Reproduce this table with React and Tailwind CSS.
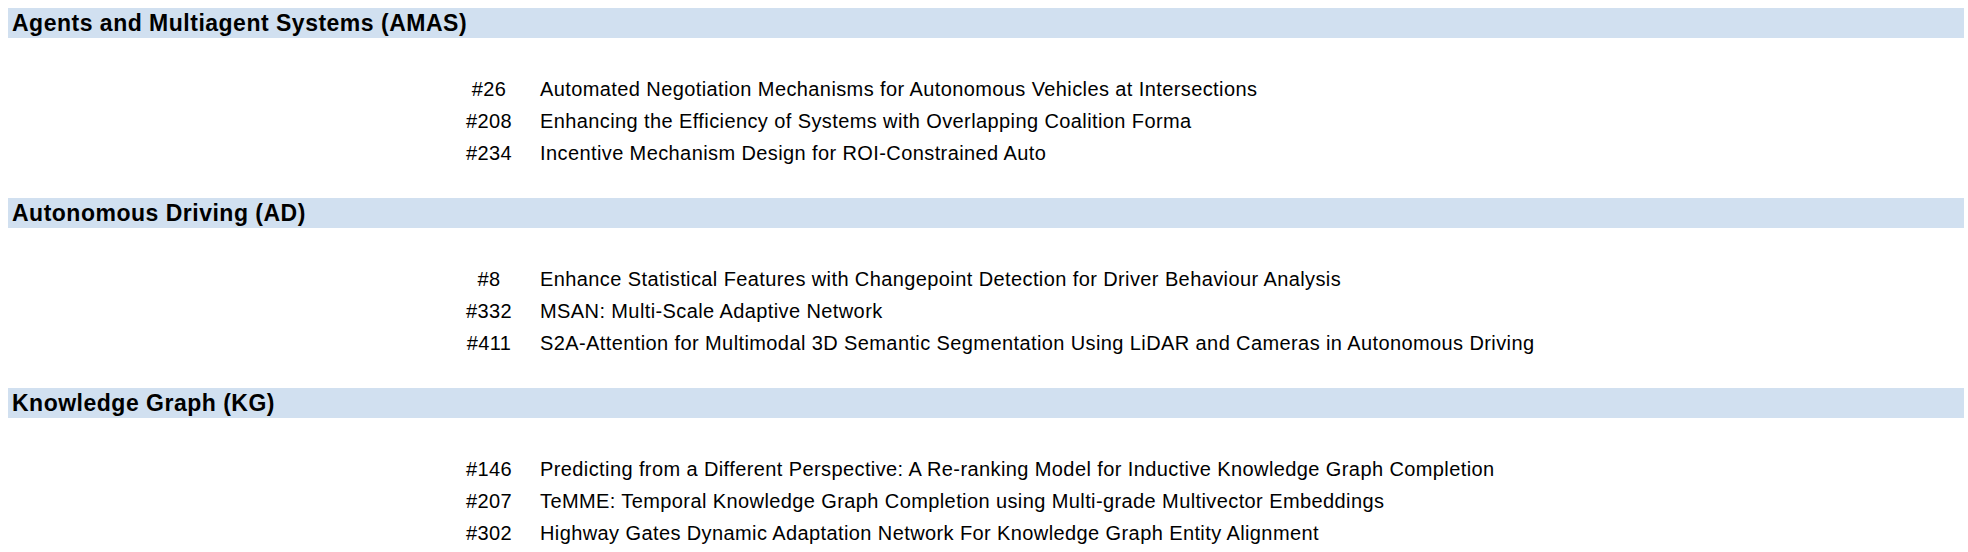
import React from "react";

const sections = [
  {
    title: "Agents and Multiagent Systems (AMAS)",
    rows: [
      ["#26", "Automated Negotiation Mechanisms for Autonomous Vehicles at Intersections"],
      ["#208", "Enhancing the Efficiency of Systems with Overlapping Coalition Forma"],
      ["#234", "Incentive Mechanism Design for ROI-Constrained Auto"],
    ],
  },
  {
    title: "Autonomous Driving (AD)",
    rows: [
      ["#8", "Enhance Statistical Features with Changepoint Detection for Driver Behaviour Analysis"],
      ["#332", "MSAN: Multi-Scale Adaptive Network"],
      ["#411", "S2A-Attention for Multimodal 3D Semantic Segmentation Using LiDAR and Cameras in Autonomous Driving"],
    ],
  },
  {
    title: "Knowledge Graph (KG)",
    rows: [
      ["#146", "Predicting from a Different Perspective: A Re-ranking Model for Inductive Knowledge Graph Completion"],
      ["#207", "TeMME: Temporal Knowledge Graph Completion using Multi-grade Multivector Embeddings"],
      ["#302", "Highway Gates Dynamic Adaptation Network For Knowledge Graph Entity Alignment"],
    ],
  },
];

export default function App() {
  return (
    <div
      className="w-[1968px] h-[552px] bg-white overflow-hidden pt-2 pl-2 pr-1 text-black"
      style={{ fontFamily: '"Liberation Sans", Arial, sans-serif' }}
    >
      {sections.map((s) => (
        <div key={s.title} className="pb-[29px]">
          <div className="h-[30px] bg-[#d1e0f0] flex items-center pl-1 text-[23px] tracking-[0.5px] font-bold leading-none">
            {s.title}
          </div>
          <div className="pt-[35px]">
            {s.rows.map(([num, t]) => (
              <div key={num} className="flex h-[32px] leading-[32px] text-[20px] tracking-[0.4px] whitespace-nowrap">
                <div className="w-[433px]" />
                <div className="w-[96px] text-center">{num}</div>
                <div className="pl-[3px]">{t}</div>
              </div>
            ))}
          </div>
        </div>
      ))}
    </div>
  );
}
